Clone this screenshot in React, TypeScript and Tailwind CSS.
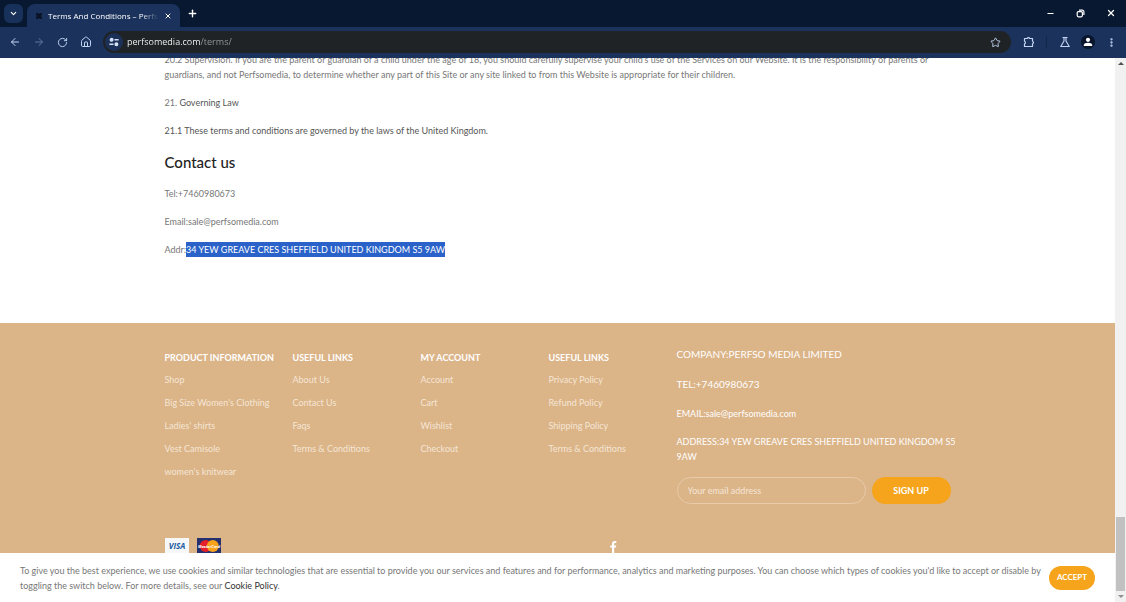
import React from "react";
import {
  ArrowLeft,
  ArrowRight,
  ChevronDown,
  EllipsisVertical,
  House,
  Minus,
  Plus,
  RotateCw,
  Star,
  X,
} from "lucide-react";

type LinkColumn = { title: string; links: string[] };

const columns: LinkColumn[] = [
  {
    title: "PRODUCT INFORMATION",
    links: ["Shop", "Big Size Women's Clothing", "Ladies' shirts", "Vest Camisole", "women's knitwear"],
  },
  { title: "USEFUL LINKS", links: ["About Us", "Contact Us", "Faqs", "Terms & Conditions"] },
  { title: "MY ACCOUNT", links: ["Account", "Cart", "Wishlist", "Checkout"] },
  {
    title: "USEFUL LINKS",
    links: ["Privacy Policy", "Refund Policy", "Shipping Policy", "Terms & Conditions"],
  },
];

function TabStrip() {
  return (
    <div className="flex h-[27px] items-end bg-[#091831] text-white">
      <button aria-label="Search tabs" className="mb-1 ml-1 flex h-[19px] w-[19px] items-center justify-center rounded-md bg-[#18315a]">
        <ChevronDown size={9} strokeWidth={3} />
      </button>
      <div className="ml-1 flex h-[23px] w-[153px] items-center rounded-t-lg bg-[#1b335c] pr-2 pl-2">
        <svg viewBox="0 0 8 8" className="h-2 w-2 shrink-0" aria-hidden="true">
          <path d="M1 1h2l1 1 1-1h2v2L6 4l1 1v2H5L4 6 3 7H1V5l1-1-1-1z" fill="#0a1428" />
        </svg>
        <span className="ml-[5px] w-[110px] overflow-hidden mask-r-from-85% text-[8px] leading-4 whitespace-nowrap">
          Terms And Conditions – Perfso
        </span>
        <button aria-label="Close tab" className="ml-auto flex">
          <X size={8} strokeWidth={3} />
        </button>
      </div>
      <button aria-label="New tab" className="mb-2 ml-[7px] flex">
        <Plus size={11} strokeWidth={3} />
      </button>
      <div className="mb-[9px] ml-auto flex items-center gap-[21px] pr-[10px]">
        <button aria-label="Minimize">
          <Minus size={9} strokeWidth={3} />
        </button>
        <button aria-label="Restore">
          <svg viewBox="0 0 9 9" className="h-[9px] w-[9px]" fill="none" stroke="currentColor" strokeWidth="1.2">
            <rect x="1.2" y="2.6" width="5.2" height="5.2" rx="1.2" />
            <path d="M3 1.2h3.2a1.7 1.7 0 0 1 1.7 1.7V6" />
          </svg>
        </button>
        <button aria-label="Close window">
          <X size={10} strokeWidth={3} />
        </button>
      </div>
    </div>
  );
}

function Toolbar() {
  return (
    <div className="flex h-[31px] items-center bg-[#1b335c] pr-[9px] pb-px pl-[9px] text-[#c3d5f3]">
      <div className="flex items-center gap-3">
        <button aria-label="Back"><ArrowLeft size={12} /></button>
        <button aria-label="Forward" className="text-[#5f779f]"><ArrowRight size={12} /></button>
        <button aria-label="Reload"><RotateCw size={11} strokeWidth={2} /></button>
        <button aria-label="Home"><House size={12} /></button>
      </div>
      <div className="ml-[11px] flex h-[22px] flex-1 items-center rounded-full bg-[#1f2325] pr-[10px] pl-[2px]">
        <button aria-label="Site information" className="flex h-[18px] w-[18px] items-center justify-center rounded-full bg-[#1c3158]">
          <svg viewBox="0 0 10 10" className="h-[10px] w-[10px]" fill="none" stroke="#d5e2f8" strokeWidth="1.4">
            <circle cx="2.6" cy="2.8" r="1.3" fill="#d5e2f8" />
            <path d="M5.5 2.8H9.6M.4 7.2h4.1" />
            <circle cx="7.4" cy="7.2" r="1.3" fill="#d5e2f8" />
          </svg>
        </button>
        <input
          type="text"
          aria-label="Address"
          defaultValue="perfsomedia.com/terms/"
          className="ml-1 min-w-0 flex-1 bg-[linear-gradient(90deg,#ffffff_73px,#9a9d9f_73px)] bg-clip-text text-[9px] leading-4 text-transparent"
        />
        <button aria-label="Bookmark"><Star size={11} /></button>
      </div>
      <button aria-label="Extensions" className="ml-3">
        <svg viewBox="0 0 24 24" className="h-3 w-3" fill="none" stroke="currentColor" strokeWidth="2.4" strokeLinejoin="round">
          <path d="M3 5h5.500a2.600 2.600 0 0 1 5 0H19v5.500a2.600 2.600 0 0 1 0 5V21H3v-5.500a2.600 2.600 0 0 0 0-5z" />
        </svg>
      </button>
      <div className="ml-[11px] h-3 w-px bg-[#10264a]" />
      <button aria-label="Labs" className="ml-3">
        <svg viewBox="0 0 24 24" className="h-3 w-3" fill="none" stroke="currentColor" strokeWidth="2.200" strokeLinejoin="round">
          <path d="M7 3h10M10 3v7L3.500 21h17L14 10V3" />
        </svg>
      </button>
      <button aria-label="Profile" className="ml-[10px]">
        <svg viewBox="0 0 14 14" className="h-[14px] w-[14px]">
          <circle cx="7" cy="7" r="7" fill="#08152b" />
          <circle cx="7" cy="4.8" r="2.1" fill="#fff" />
          <path d="M2.8 11V9.8C2.8 8.4 5 7.7 7 7.7s4.2.7 4.2 2.1V11z" fill="#fff" />
        </svg>
      </button>
      <button aria-label="Menu" className="ml-[11px]"><EllipsisVertical size={11} strokeWidth={3} /></button>
    </div>
  );
}

function Article() {
  return (
    <article className="mx-auto -mt-[6px] flex w-full max-w-[786px] flex-col gap-[13px] pb-[66px] text-[9px] leading-[15px] text-[#777]">
      <p className="whitespace-nowrap">
        20.2 Supervision. If you are the parent or guardian of a child under the age of 18, you should carefully supervise your child's use of the Services on our Website. It is the responsibility of parents or
        <br />
        guardians, and not Perfsomedia, to determine whether any part of this Site or any site linked to from this Website is appropriate for their children.
      </p>
      <p>21. <span className="text-[#555]">Governing Law</span></p>
      <p className="text-[#555]">21.1 These terms and conditions are governed by the laws of the United Kingdom.</p>
      <h2 className="text-[15px] leading-[22px] font-medium text-[#222]">Contact us</h2>
      <p>Tel:+7460980673</p>
      <p>Email:sale@perfsomedia.com</p>
      <p>
        Addr:<mark className="inline-block bg-[#2a62c9] text-white">34 YEW GREAVE CRES SHEFFIELD UNITED KINGDOM S5 9AW</mark>
      </p>
    </article>
  );
}

function PaymentCards() {
  return (
    <div className="flex gap-2">
      <svg viewBox="0 0 24 16" className="h-4 w-6" role="img" aria-label="Visa">
        <rect width="24" height="16" fill="#f6f7f8" />
        <text x="12" y="11" textAnchor="middle" fontSize="8" fontWeight="700" fontStyle="italic" fill="#1b5c9e" className="font-['Open_Sans',sans-serif]">VISA</text>
      </svg>
      <svg viewBox="0 0 24 16" className="h-4 w-6" role="img" aria-label="MasterCard">
        <rect width="24" height="16" fill="#25316f" />
        <circle cx="8.7" cy="8" r="6" fill="#e3202b" />
        <circle cx="15.8" cy="8" r="6" fill="#f6a21b" />
        <text x="12" y="9.6" textAnchor="middle" fontSize="4" fontWeight="700" fontStyle="italic" fill="#fff" className="font-['Open_Sans',sans-serif]">MasterCard</text>
      </svg>
    </div>
  );
}

function Footer() {
  return (
    <footer className="flex-1 bg-[#dbb488] pt-[23px] text-[9px] leading-[15px] text-white">
      <div className="mx-auto grid max-w-[786px] grid-cols-[1fr_1fr_1fr_1fr_274px]">
        {columns.map((column, index) => (
          <nav key={index} className="pt-1 whitespace-nowrap">
            <h3 className="font-bold">{column.title}</h3>
            <ul className="mt-[7px] flex flex-col gap-2 text-[#f5e6d5]">
              {column.links.map((link) => (
                <li key={link}><a href="#">{link}</a></li>
              ))}
            </ul>
          </nav>
        ))}
        <div>
          <p className="text-[10px] leading-4">COMPANY:PERFSO MEDIA LIMITED</p>
          <p className="mt-[14px] text-[10px] leading-4">TEL:+7460980673</p>
          <p className="mt-[14px]">EMAIL:sale@perfsomedia.com</p>
          <p className="mt-[13px] whitespace-nowrap">
            ADDRESS:34 YEW GREAVE CRES SHEFFIELD UNITED KINGDOM S5
            <br />
            9AW
          </p>
          <form className="mt-[13px] flex gap-[6px]" onSubmit={(event) => event.preventDefault()}>
            <input
              type="email"
              aria-label="Your email address"
              placeholder="Your email address"
              className="h-[27px] min-w-0 flex-1 rounded-full border border-[#e8cba9] bg-transparent px-[10px] placeholder:text-[#f5e6d5]"
            />
            <button className="h-[27px] w-[79px] rounded-full bg-[#f5a41b] font-bold">SIGN UP</button>
          </form>
        </div>
      </div>
      <div className="mx-auto mt-[34px] grid max-w-[786px] grid-cols-2">
        <PaymentCards />
        <a href="#" aria-label="Facebook" className="pt-[3px] pl-[52px]">
          <svg viewBox="0 0 7 12" className="h-3 w-[7px]">
            <path d="M2 12V6.6H.2V4.5H2V3C2 1.1 3.1.1 4.8.1 5.6.1 6.3.2 6.3.2V2H5.4C4.5 2 4.2 2.5 4.2 3.1V4.5H6.3L5.9 6.6H4.2V12z" fill="#fff" />
          </svg>
        </a>
      </div>
    </footer>
  );
}

function CookieNotice() {
  return (
    <div role="region" aria-label="Cookies" className="absolute inset-x-0 bottom-0 flex h-[49px] items-center justify-between bg-white px-5 text-[9px] leading-[15px] text-[#777]">
      <p className="whitespace-nowrap">
        To give you the best experience, we use cookies and similar technologies that are essential to provide you our services and features and for performance, analytics and marketing purposes. You can choose which types of cookies you'd like to accept or disable by
        <br />
        toggling the switch below. For more details, see our <a href="#" className="text-[#333]">Cookie Policy</a>.
      </p>
      <button className="h-6 w-[46px] shrink-0 rounded-full bg-[#f5a41b] text-[8px] font-bold text-white">ACCEPT</button>
    </div>
  );
}

function Scrollbar() {
  return (
    <div aria-hidden="true" className="flex w-[11px] flex-col items-center bg-[#f1f1f1] py-1">
      <svg viewBox="0 0 6 3" className="h-[3px] w-[6px]"><path d="M0 3 3 0l3 3z" fill="#505050" /></svg>
      <div className="mt-auto mb-1 h-[74px] w-[9px] bg-[#c1c1c1]" />
      <svg viewBox="0 0 6 3" className="h-[3px] w-[6px]"><path d="M0 0l3 3 3-3z" fill="#909090" /></svg>
    </div>
  );
}

export default function App() {
  return (
    <div className="flex h-screen flex-col overflow-hidden bg-white">
      <header className="shrink-0 font-['Open_Sans',sans-serif]">
        <TabStrip />
        <Toolbar />
      </header>
      <div className="flex min-h-0 flex-1">
        <main className="relative flex min-w-0 flex-1 flex-col overflow-hidden font-['Lato',sans-serif]">
          <Article />
          <Footer />
          <CookieNotice />
        </main>
        <Scrollbar />
      </div>
    </div>
  );
}
